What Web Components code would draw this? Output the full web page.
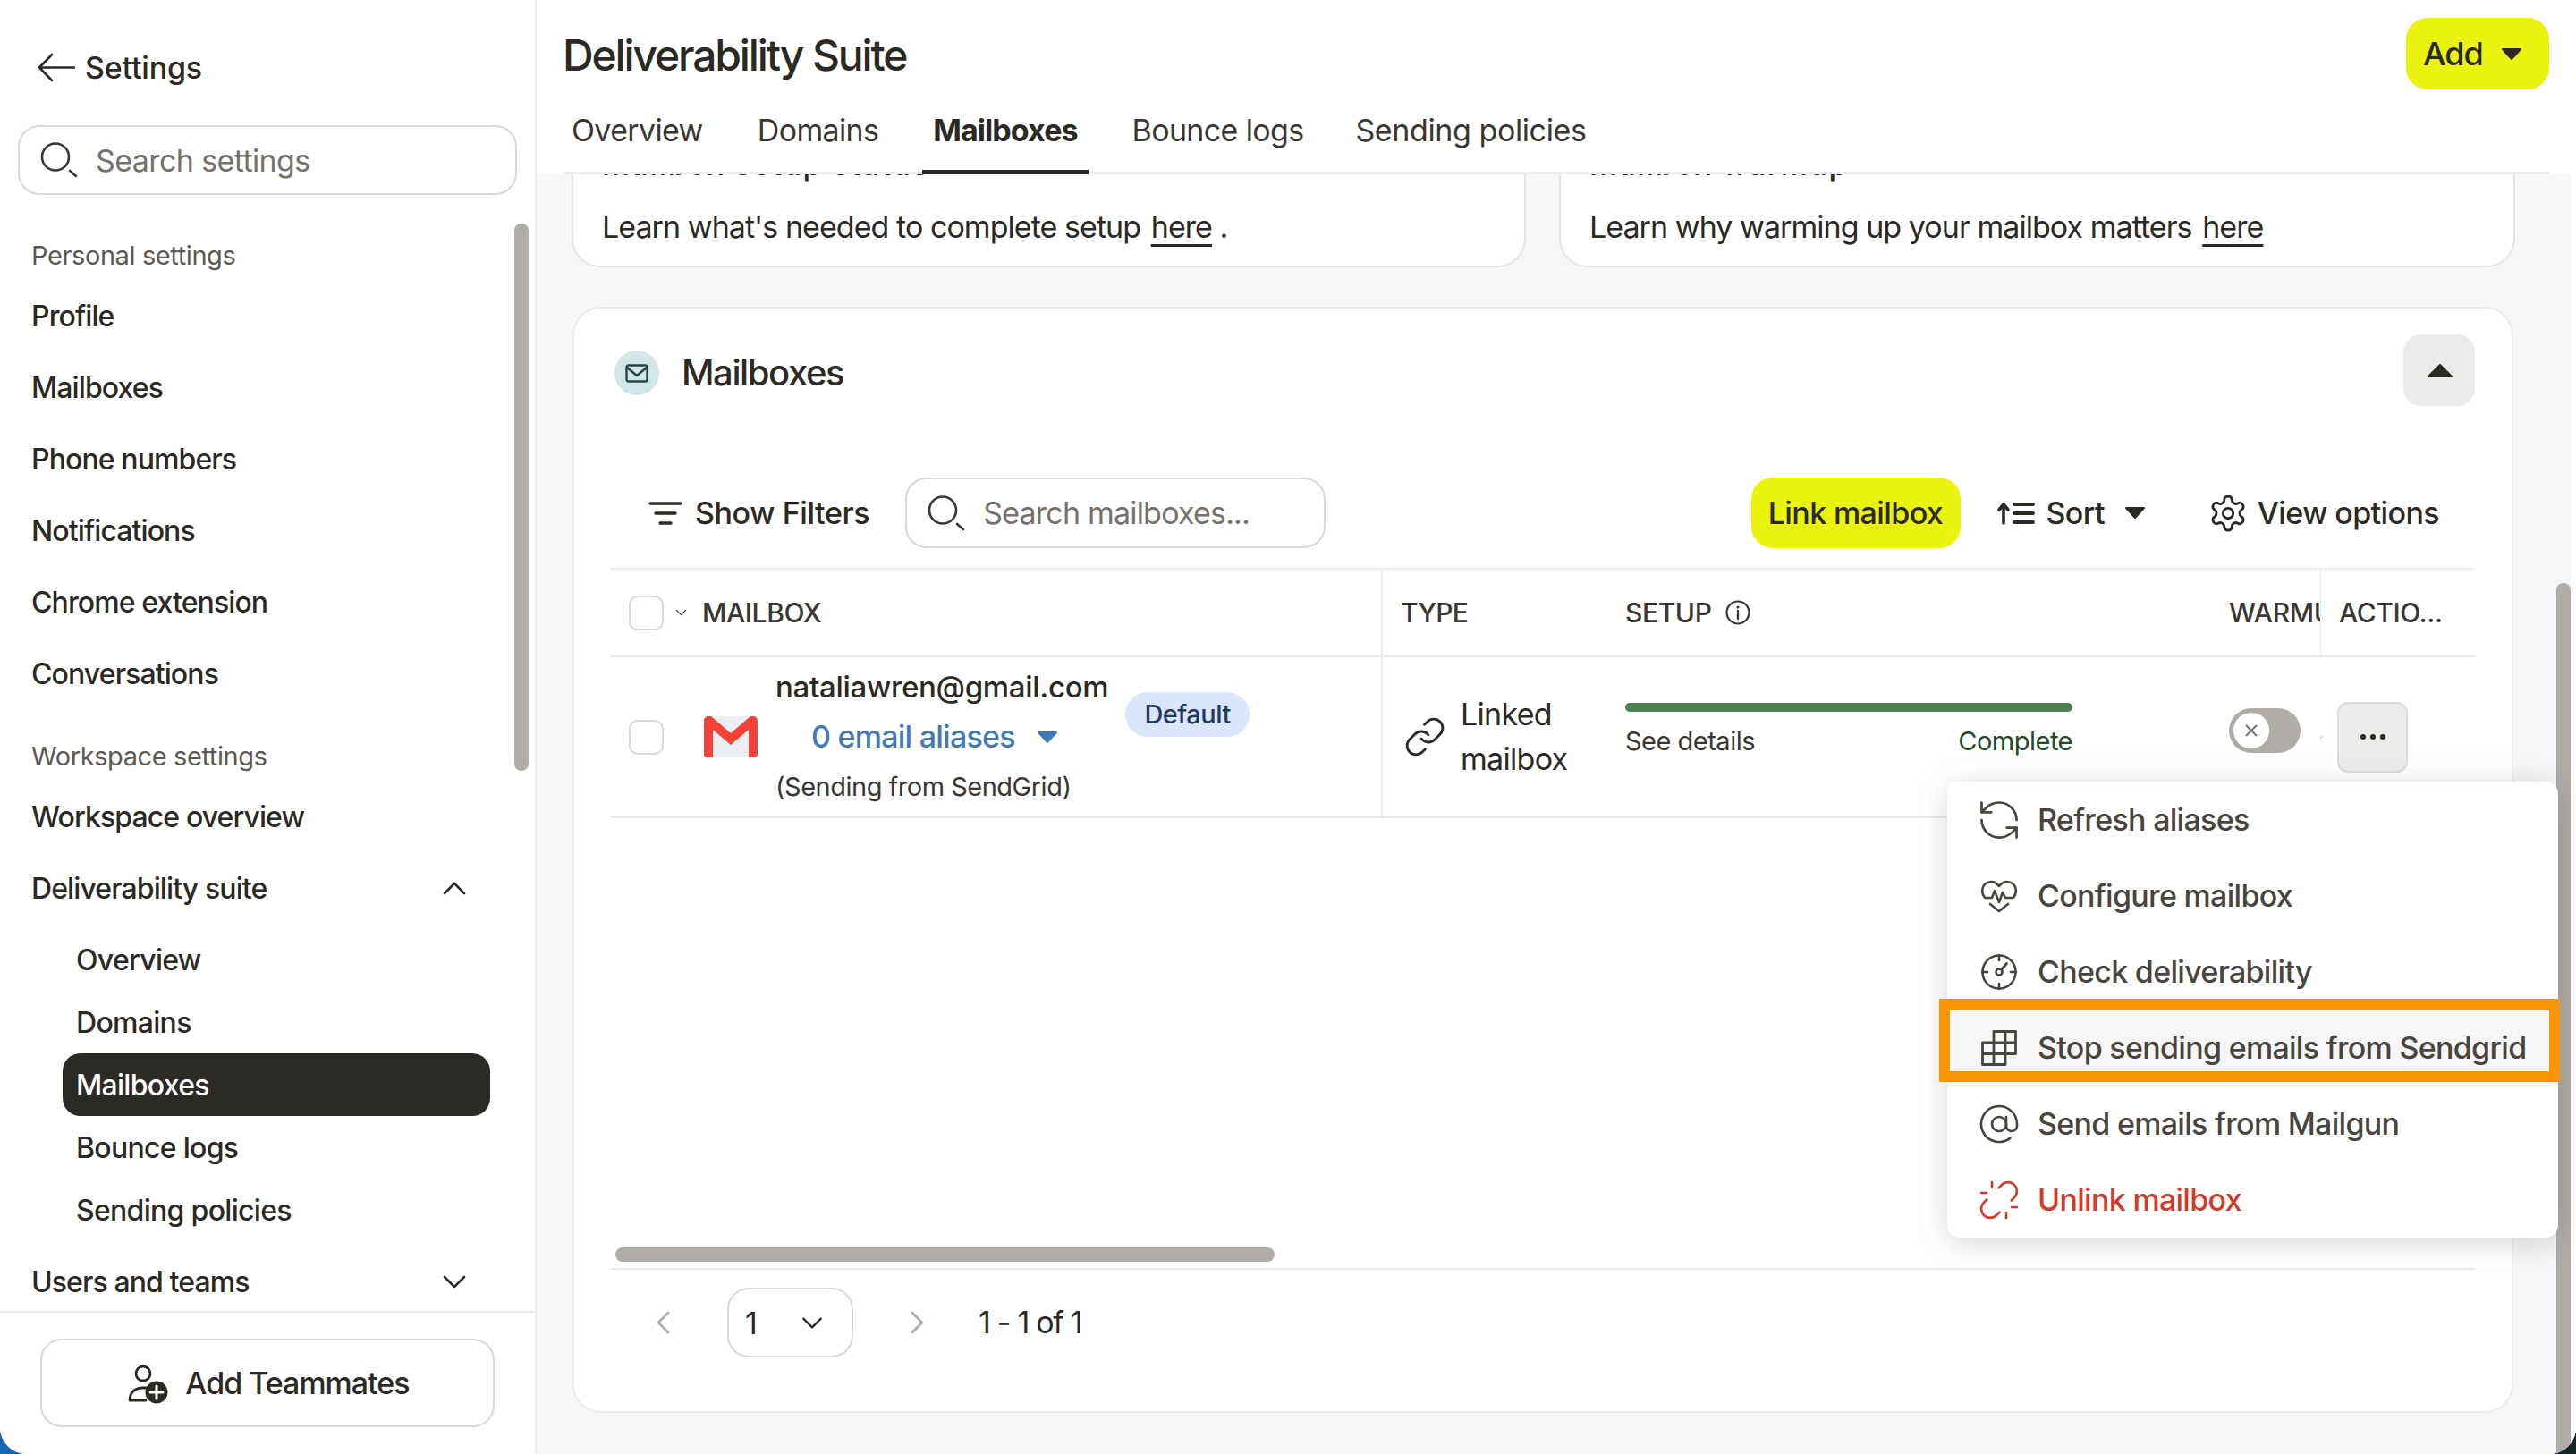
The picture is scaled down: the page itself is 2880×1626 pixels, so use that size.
<!DOCTYPE html>
<html lang="en">
<head>
<meta charset="utf-8">
<title>Deliverability Suite</title>
<style>
html, body { margin: 0; width: 2880px; height: 1626px; overflow: hidden; }
body { background: linear-gradient(90deg, #1566b8 0, #1566b8 60px, #14262a 2800px); }
</style>
</head>
<body>
<app-window>
  <settings-sidebar slot="side">
    <nav-label>Personal settings</nav-label>
    <nav-item>Profile</nav-item>
    <nav-item>Mailboxes</nav-item>
    <nav-item>Phone numbers</nav-item>
    <nav-item>Notifications</nav-item>
    <nav-item>Chrome extension</nav-item>
    <nav-item>Conversations</nav-item>
    <nav-label gap>Workspace settings</nav-label>
    <nav-item>Workspace overview</nav-item>
    <nav-item chevron="up">Deliverability suite</nav-item>
    <nav-item sub first>Overview</nav-item>
    <nav-item sub>Domains</nav-item>
    <nav-item sub active>Mailboxes</nav-item>
    <nav-item sub>Bounce logs</nav-item>
    <nav-item sub last>Sending policies</nav-item>
    <nav-item chevron="down">Users and teams</nav-item>
  </settings-sidebar>
  <page-header slot="head"></page-header>
  <info-cards slot="main">
    <info-card heading="Mailbox setup status" suffix=" .">Learn what's needed to complete setup</info-card>
    <info-card heading="Mailbox warmup">Learn why warming up your mailbox matters</info-card>
  </info-cards>
  <mailbox-panel slot="main"></mailbox-panel>
  <action-menu slot="overlay"></action-menu>
</app-window>

<script>
const ICONS = {
  back: '<path d="M40 15.500H1M15 1 1 15.500 15 30" stroke-width="2.600"/>',
  search: '<circle cx="16" cy="15.500" r="15" stroke-width="2.600"/><path d="m32 31 7 6" stroke-width="2.600"/>',
  envelope: '<rect x="1.500" y="1.500" width="23" height="18" rx="2" stroke-width="2.400"/><path d="m2 4 11 9 11-9" stroke-width="2.400"/>',
  filter: '<path d="M0 2h34M6 13h22M11 24h12" stroke-width="3.400"/>',
  sort: '<path d="M6 24V3M1 9l5-6 5 6" stroke-width="3.600"/><path d="M18 3h21M18 13h21M18 23h21" stroke-width="3.800" stroke-linecap="round"/>',
  gear: '<g transform="translate(-2.800 -2.800) scale(1.900)"><path stroke-width="1.500" d="M12.220 2h-.44a2 2 0 0 0-2 2v.18a2 2 0 0 1-1 1.730l-.43.25a2 2 0 0 1-2 0l-.15-.08a2 2 0 0 0-2.730.73l-.22.38a2 2 0 0 0 .73 2.730l.15.1a2 2 0 0 1 1 1.720v.51a2 2 0 0 1-1 1.740l-.15.09a2 2 0 0 0-.73 2.730l.22.38a2 2 0 0 0 2.730.73l.15-.08a2 2 0 0 1 2 0l.43.25a2 2 0 0 1 1 1.730V20a2 2 0 0 0 2 2h.44a2 2 0 0 0 2-2v-.18a2 2 0 0 1 1-1.730l.43-.25a2 2 0 0 1 2 0l.15.08a2 2 0 0 0 2.730-.73l.22-.39a2 2 0 0 0-.73-2.730l-.15-.08a2 2 0 0 1-1-1.740v-.5a2 2 0 0 1 1-1.740l.15-.09a2 2 0 0 0 .73-2.730l-.22-.38a2 2 0 0 0-2.730-.73l-.15.08a2 2 0 0 1-2 0l-.43-.25a2 2 0 0 1-1-1.730V4a2 2 0 0 0-2-2z"/><circle cx="12" cy="12" r="3" stroke-width="1.500"/></g>',
  link: '<g transform="translate(-3 -3) scale(2)"><path stroke-width="1.400" d="M10 13a5 5 0 0 0 7.540.54l3-3a5 5 0 0 0-7.070-7.070l-1.720 1.710"/><path stroke-width="1.400" d="M14 11a5 5 0 0 0-7.540-.54l-3 3a5 5 0 0 0 7.070 7.070l1.710-1.710"/></g>',
  info: '<circle cx="14" cy="14" r="12.500" stroke-width="2.200"/><path d="M14 12v9" stroke-width="2.400"/><circle cx="14" cy="8" r="1.500" fill="currentColor" stroke="none"/>',
  refresh: '<g transform="translate(-6 -6) scale(2.170)"><path stroke-width="1.250" d="M21 12a9 9 0 0 0-9-9 9.750 9.750 0 0 0-6.740 2.740L3 8"/><path stroke-width="1.250" d="M3 3v5h5"/><path stroke-width="1.250" d="M3 12a9 9 0 0 0 9 9 9.750 9.750 0 0 0 6.740-2.740L21 16"/><path stroke-width="1.250" d="M16 16h5v5"/></g>',
  heart: '<path stroke-width="2.600" d="M4 22C0 17 0 9 6 5.500 12 2.500 17 5 20 9c3-4 8-6.500 14-3.500 6 3.500 6 11.500 2 16.500h-9l-3-6-4 11-5-13-3 8z"/><path stroke-width="2.600" d="m10 29 10 8 10-8"/>',
  gauge: '<circle cx="20" cy="20" r="18.500" stroke-width="2.600"/><path stroke-width="2.600" d="M20 1v6M20 33v6M1 20h6M33 20h6"/><circle cx="20" cy="20" r="3.500" stroke-width="2.600"/><path stroke-width="2.800" d="m22.500 17.500 6-7"/>',
  grid: '<path stroke-width="2.800" d="M14 1.500h24.500v25H27M14 14V1.500M27 1.500v25M1.500 14h37M1.500 14v24.500H27V14M14 14v24.500M1.500 26.500H27"/>',
  at: '<g transform="translate(-4 -4) scale(2)"><circle cx="12" cy="12" r="4" stroke-width="1.300"/><path stroke-width="1.300" d="M16 8v5a3 3 0 0 0 6 0v-1a10 10 0 1 0-3.920 7.940"/></g>',
  unlink: '<g transform="translate(-4 -4) scale(2)"><path stroke-width="1.300" d="m18.840 12.250 1.720-1.710h-.02a5.004 5.004 0 0 0-.12-7.070 5.006 5.006 0 0 0-6.950 0l-1.720 1.710"/><path stroke-width="1.300" d="m5.170 11.750-1.710 1.710a5.004 5.004 0 0 0 .12 7.070 5.006 5.006 0 0 0 6.950 0l1.710-1.710"/><path stroke-width="1.300" d="M8 2v3M2 8h3M16 19v3M19 16h3"/></g>',
  gmail: '<path fill="#eceff1" stroke="none" d="M4 0h52a4 4 0 0 1 4 4v38a4 4 0 0 1-4 4H4a4 4 0 0 1-4-4V4a4 4 0 0 1 4-4z"/><path fill="#f44336" stroke="none" d="M0 5a5 5 0 0 1 5-5h3l22 19L52 0h3a5 5 0 0 1 5 5v37a4 4 0 0 1-4 4h-6V15L30 32 10 15v31H4a4 4 0 0 1-4-4z"/>',
  addUser: '<circle cx="17" cy="11" r="8" stroke-width="2.800"/><path stroke-width="2.800" d="M2 41c0-9 6-14 15-14h5M2 41h18"/><circle cx="32" cy="32" r="12.500" fill="currentColor" stroke="none"/><path stroke="#fff" stroke-width="3" d="M32 25v14M25 32h14"/>',
  chevUp: '<path d="M2 14 13 3l11 11" stroke-width="2.600"/>',
  chevDown: '<path d="m2 3 11 11L24 3" stroke-width="2.600"/>',
  pageLeft: '<path d="M13 1 2 12l11 11" stroke-width="2.600"/>',
  pageRight: '<path d="m2 1 11 11L2 23" stroke-width="2.600"/>',
  triDown: '<path fill="currentColor" stroke="currentColor" stroke-width="2" stroke-linejoin="round" d="M2 2h20L12 13z"/>',
  triUp: '<path fill="currentColor" stroke="currentColor" stroke-width="2" stroke-linejoin="round" d="M12 2 25 15H-1z" transform="translate(1 0)"/>'
};

class UiIcon extends HTMLElement {
  constructor() {
    super();
    this.sr = this.attachShadow({ mode: "open" });
  }

  connectedCallback() {
    const w = this.getAttribute("w");
    const h = this.getAttribute("h") || w;
    const box = this.getAttribute("box") || `0 0 ${w} ${h}`;
    this.sr.innerHTML = `<style>
:host { display: inline-flex; flex: none; width: ${w}px; height: ${h}px; }
svg { width: 100%; height: 100%; overflow: visible; fill: none; stroke: currentColor; stroke-linecap: round; stroke-linejoin: round; }
</style><svg viewBox="${box}">${ICONS[this.getAttribute("name")]}</svg>`;
  }
}
customElements.define("ui-icon", UiIcon);

class AppWindow extends HTMLElement {
  constructor() {
    super();
    this.sr = this.attachShadow({ mode: "open" });
    this.sr.innerHTML = `<style>
:host { display: grid; grid-template-columns: 600px 1fr; position: relative; width: 2880px; height: 1626px; overflow: hidden; background: #fff; border-radius: 0 0 30px 30px; font-family: Inter, "Liberation Sans", sans-serif; color: #2b2924; }
.main { display: flex; flex-direction: column; min-width: 0; height: 1626px; background: #fff; }
.scroll { position: relative; flex: 1; overflow: hidden; background: #f6f6f6; border-right: 6px solid #fff; }
.bar { position: absolute; right: 0; top: 457px; bottom: 0; width: 16px; background: #b0aca8; border-radius: 8px 8px 0 0; }
</style>
<slot name="side"></slot>
<div class="main">
  <slot name="head"></slot>
  <div class="scroll"><slot name="main"></slot><div class="bar"></div></div>
</div>
<slot name="overlay"></slot>`;
  }
}
customElements.define("app-window", AppWindow);

class SearchBox extends HTMLElement {
  constructor() {
    super();
    this.sr = this.attachShadow({ mode: "open" });
    this.sr.innerHTML = `<style>
:host { display: flex; align-items: center; box-sizing: border-box; border: 2px solid #d9d9d7; border-radius: 24px; background: #fff; color: #75716b; font-size: 34px; letter-spacing: -0.8px; }
ui-icon { color: #3a3733; }
</style><ui-icon name="search" w="40" h="38"></ui-icon><slot></slot>`;
  }
}
customElements.define("search-box", SearchBox);

class SettingsSidebar extends HTMLElement {
  constructor() {
    super();
    this.sr = this.attachShadow({ mode: "open" });
    this.sr.innerHTML = `<style>
:host { display: flex; flex-direction: column; position: relative; box-sizing: border-box; width: 600px; height: 1626px; border-right: 2px solid #ececec; background: #fff; }
.top { display: flex; align-items: center; gap: 12px; height: 80px; margin: 35px 0 25px 43px; font-size: 34px; font-weight: 500; letter-spacing: -0.2px; }
search-box { width: 558px; height: 78px; margin-left: 20px; padding-left: 24px; font-size: 34px; gap: 21px; letter-spacing: -0.6px; }
nav { flex: 1; overflow: hidden; padding-top: 39px; min-height: 0; }
.bar { position: absolute; left: 575px; top: 250px; width: 16px; height: 612px; border-radius: 8px; background: #b0aca8; }
.foot { flex: none; box-sizing: border-box; height: 160px; border-top: 2px solid #ececec; padding: 29px 0 0 45px; }
.add { display: flex; align-items: center; justify-content: center; gap: 20px; box-sizing: border-box; width: 508px; height: 99px; padding-left: 3px; border: 2px solid #d9d9d7; border-radius: 24px; font-size: 34px; font-weight: 500; letter-spacing: -1px; }
</style>
<div class="top"><ui-icon name="back" w="40" h="31"></ui-icon><span>Settings</span></div>
<search-box>Search settings</search-box>
<nav><slot></slot></nav>
<div class="bar"></div>
<div class="foot"><div class="add"><ui-icon name="addUser" w="44"></ui-icon><span>Add Teammates</span></div></div>`;
  }
}
customElements.define("settings-sidebar", SettingsSidebar);

class NavLabel extends HTMLElement {
  constructor() {
    super();
    this.sr = this.attachShadow({ mode: "open" });
    this.sr.innerHTML = `<style>
:host { display: flex; align-items: center; height: 56px; padding-left: 35px; font-size: 29px; color: #5c5954; letter-spacing: -0.4px; }
:host([gap]) { margin-top: 24px; }
</style><slot></slot>`;
  }
}
customElements.define("nav-label", NavLabel);

class NavItem extends HTMLElement {
  constructor() {
    super();
    this.sr = this.attachShadow({ mode: "open" });
  }

  connectedCallback() {
    const chevron = this.getAttribute("chevron");
    let arrow = "";
    if (chevron === "up") arrow = '<ui-icon name="chevUp" w="26" h="17"></ui-icon>';
    if (chevron === "down") arrow = '<ui-icon name="chevDown" w="26" h="17"></ui-icon>';
    this.sr.innerHTML = `<style>
:host { display: flex; align-items: center; justify-content: space-between; box-sizing: border-box; width: 521px; height: 80px; padding-left: 35px; font-size: 32px; font-weight: 500; letter-spacing: -0.9px; }
:host([sub]) { width: 478px; height: 70px; margin-left: 70px; padding-left: 15px; letter-spacing: -0.7px; }
:host([first]) { margin-top: 5px; }
:host([last]) { margin-bottom: 5px; }
:host([active]) { background: #2c2a26; color: #fff; border-radius: 20px; }
</style><slot></slot>${arrow}`;
  }
}
customElements.define("nav-item", NavItem);

class PageHeader extends HTMLElement {
  constructor() {
    super();
    this.sr = this.attachShadow({ mode: "open" });
    this.sr.innerHTML = `<style>
:host { display: block; flex: none; box-sizing: border-box; height: 195px; padding: 0 30px; background: #fff; }
.in { box-sizing: border-box; height: 195px; border-bottom: 3px solid #ececec; }
.row { display: flex; justify-content: space-between; height: 100px; padding-top: 20px; box-sizing: border-box; }
h1 { margin: 14px 0 0 -1px; font-size: 48px; line-height: 56px; font-weight: 500; letter-spacing: -2.15px; }
.add { display: flex; align-items: center; gap: 20px; box-sizing: border-box; width: 160px; height: 80px; padding-left: 19px; border-radius: 24px; background: #eaf30f; font-size: 36px; font-weight: 500; letter-spacing: -1px; }
.tabs { display: flex; gap: 37px; margin-left: -3px; height: 95px; }
.tab { display: flex; align-items: center; box-sizing: border-box; height: 95px; padding: 0 12px 5px; font-size: 34px; letter-spacing: -0.65px; color: #3a3733; }
.tab.on { font-weight: 700; color: #2b2924; border-bottom: 5px solid #2b2924; padding-bottom: 0; letter-spacing: -0.95px; }
.tab.last { margin-left: -3px; letter-spacing: -0.4px; }
</style>
<div class="in">
  <div class="row"><h1>Deliverability Suite</h1><div class="add"><span>Add</span><ui-icon name="triDown" w="24" h="15" box="0 0 24 15"></ui-icon></div></div>
  <div class="tabs"><div class="tab">Overview</div><div class="tab">Domains</div><div class="tab on">Mailboxes</div><div class="tab">Bounce logs</div><div class="tab last">Sending policies</div></div>
</div>`;
  }
}
customElements.define("page-header", PageHeader);

class InfoCards extends HTMLElement {
  constructor() {
    super();
    this.sr = this.attachShadow({ mode: "open" });
    this.sr.innerHTML = `<style>
:host { display: grid; grid-template-columns: 1067px 1069px; gap: 37px; margin: -47px 0 44px 39px; }
</style><slot></slot>`;
  }
}
customElements.define("info-cards", InfoCards);

class InfoCard extends HTMLElement {
  constructor() {
    super();
    this.sr = this.attachShadow({ mode: "open" });
  }

  connectedCallback() {
    this.sr.innerHTML = `<style>
:host { display: block; box-sizing: border-box; height: 151px; padding: 15px 0 0 32px; background: #fff; border: 2px solid #e4e4e4; border-top: 0; border-radius: 0 0 32px 32px; }
h2 { margin: 0 0 25px; font-size: 34px; line-height: 41px; font-weight: 500; letter-spacing: 1.5px; white-space: nowrap; }
p { margin: 0; font-size: 34px; line-height: 50px; letter-spacing: -0.95px; color: #2b2924; }
a { color: inherit; text-decoration: underline; text-decoration-thickness: 3px; text-underline-offset: 7px; margin-left: 3px; }
</style><h2>${this.getAttribute("heading")}</h2><p><slot></slot> <a>here</a>${this.getAttribute("suffix") || ""}</p>`;
  }
}
customElements.define("info-card", InfoCard);

class CheckBox extends HTMLElement {
  constructor() {
    super();
    this.sr = this.attachShadow({ mode: "open" });
    this.sr.innerHTML = `<style>
:host { display: block; flex: none; box-sizing: border-box; width: 39px; height: 39px; border: 2px solid #d9d9d7; border-radius: 10px; background: #fff; }
</style>`;
  }
}
customElements.define("check-box", CheckBox);

class MailboxPanel extends HTMLElement {
  constructor() {
    super();
    this.sr = this.attachShadow({ mode: "open" });
    this.sr.innerHTML = `<style>
:host { display: flex; flex-direction: column; box-sizing: border-box; width: 2170px; height: 1237px; margin-left: 40px; padding: 29px 41px 0 40px; background: #fff; border: 2px solid #ececec; border-radius: 32px; }
.head { display: flex; align-items: center; height: 80px; padding-left: 5px; }
.dot { display: flex; align-items: center; justify-content: center; width: 50px; height: 50px; margin: 6px 25px 0 0; border-radius: 50%; background: #d2e6e8; color: #24454b; }
h2 { flex: 1; margin: 4px 0 0; font-size: 40px; font-weight: 500; letter-spacing: -1.4px; }
.toggle { display: flex; align-items: center; justify-content: center; width: 80px; height: 80px; padding-left: 2px; box-sizing: border-box; border-radius: 20px; background: #ebebea; }
.scroll { margin: auto 0 7px 6px; width: 737px; height: 16px; flex: none; border-radius: 8px; background: #b0aca8; }
</style>
<div class="head"><div class="dot"><ui-icon name="envelope" w="26" h="21"></ui-icon></div><h2>Mailboxes</h2><div class="toggle"><ui-icon name="triUp" w="26" h="16" box="0 0 26 16"></ui-icon></div></div>
<mailbox-toolbar></mailbox-toolbar>
<mailbox-table></mailbox-table>
<div class="scroll"></div>
<table-pager></table-pager>`;
  }
}
customElements.define("mailbox-panel", MailboxPanel);

class MailboxToolbar extends HTMLElement {
  constructor() {
    super();
    this.sr = this.attachShadow({ mode: "open" });
    this.sr.innerHTML = `<style>
:host { display: flex; align-items: center; flex: none; height: 79px; margin: 80px 0 22px; padding: 0 40px 0 45px; font-size: 34px; font-weight: 500; letter-spacing: -0.6px; }
search-box { width: 470px; height: 79px; margin-left: 40px; padding-left: 24px; gap: 21px; font-weight: 400; }
.link { display: flex; align-items: center; justify-content: center; box-sizing: border-box; width: 234px; height: 79px; margin-left: auto; padding-right: 2px; border-radius: 24px; background: #eaf30f; }
.sort { display: flex; align-items: center; margin-left: 42px; }
.sort span { margin: 0 22px 0 13px; }
.view { display: flex; align-items: center; gap: 13px; margin-left: 72px; }
.filters { display: flex; align-items: center; gap: 16px; letter-spacing: -0.4px; }
</style>
<div class="filters"><ui-icon name="filter" w="34" h="26"></ui-icon><span>Show Filters</span></div>
<search-box>Search mailboxes...</search-box>
<div class="link">Link mailbox</div>
<div class="sort"><ui-icon name="sort" w="40" h="26"></ui-icon><span>Sort</span><ui-icon name="triDown" w="24" h="15" box="0 0 24 15"></ui-icon></div>
<div class="view"><ui-icon name="gear" w="40"></ui-icon><span>View options</span></div>`;
  }
}
customElements.define("mailbox-toolbar", MailboxToolbar);

class MailboxTable extends HTMLElement {
  constructor() {
    super();
    this.sr = this.attachShadow({ mode: "open" });
    this.sr.innerHTML = `<style>
:host { display: grid; flex: none; grid-template-columns: 864px 251px 675px 122px 173px; grid-template-rows: 98px 178px; box-sizing: border-box; width: 2085px; border-top: 2px solid #ececec; border-bottom: 2px solid #ececec; font-size: 32px; letter-spacing: -0.6px; }
.th { display: flex; align-items: center; gap: 15px; box-sizing: border-box; padding-left: 21px; border-bottom: 2px solid #ececec; overflow: hidden; white-space: nowrap; font-size: 30px; font-weight: 500; color: #3a3733; letter-spacing: -0.4px; }
.first { border-right: 2px solid #ececec; }
.act { border-left: 1px solid #ececec; padding-left: 20px; }
.td { display: flex; box-sizing: border-box; padding-left: 21px; align-items: center; min-width: 0; }
.tiny { margin-left: -2px; margin-right: 2px; color: #3a3733; }
.logo { margin: 0 20px 0 45px; }
.who { display: flex; flex-direction: column; white-space: nowrap; }
.who div { height: 56px; line-height: 56px; }
.email { font-weight: 500; font-size: 33px; letter-spacing: -0.3px; }
.aliases { display: flex; align-items: center; gap: 24px; padding-left: 40px; color: #4279b5; font-weight: 500; font-size: 34px; letter-spacing: -0.75px; }
.sending { font-size: 29px; color: #3a3733; letter-spacing: -0.5px; }
.pill { align-self: flex-start; margin: 39px 0 0 19px; padding: 0 21px; height: 50px; line-height: 50px; border-radius: 25px; background: #dbe5fb; color: #1e3a5f; font-size: 29px; font-weight: 500; letter-spacing: -0.5px; }
.type { padding-left: 26px; gap: 19px; line-height: 50px; font-size: 34px; letter-spacing: -0.7px; color: #2b2924; }
.setup { display: block; padding: 51px 0 0 20px; }
.track { width: 500px; height: 10px; border-radius: 5px; background: #4c8050; }
.under { display: flex; justify-content: space-between; width: 500px; margin-top: 15px; line-height: 36px; font-size: 29px; color: #3a3733; letter-spacing: -0.5px; }
.done { color: #1f4a26; }
.warm { padding: 0 0 14px 20px; }
.sw { display: flex; align-items: center; width: 80px; height: 50px; box-sizing: border-box; padding-left: 5px; border-radius: 25px; background: #b0aca8; }
.knob { display: flex; align-items: center; justify-content: center; width: 40px; height: 40px; border-radius: 50%; background: #fff; color: #77736d; }
.knob svg { width: 16px; height: 16px; stroke: currentColor; stroke-width: 2; fill: none; }
.tick { flex: none; width: 3px; height: 3px; margin: 0 16px 0 -19px; border-radius: 50%; background: #d9d9d7; }
.more { display: flex; align-items: center; justify-content: center; gap: 5px; box-sizing: border-box; width: 79px; height: 79px; border: 2px solid #dcdcda; border-radius: 12px; background: #ebebea; }
.more i { display: block; width: 6px; height: 6px; border-radius: 50%; background: #2b2924; }
</style>
<div class="th first"><check-box></check-box><ui-icon class="tiny" name="chevDown" w="13" h="8" box="0 0 26 17"></ui-icon><span>MAILBOX</span></div>
<div class="th" style="padding-left:20px;letter-spacing:-0.8px">TYPE</div>
<div class="th" style="padding-left:20px"><span>SETUP</span><ui-icon name="info" w="28"></ui-icon></div>
<div class="th" style="padding-left:20px">WARMUP</div>
<div class="th act">ACTIO...</div>
<div class="td first"><check-box></check-box><ui-icon class="logo" name="gmail" w="60" h="46"></ui-icon>
  <div class="who"><div class="email">nataliawren@gmail.com</div><div class="aliases"><span>0 email aliases</span><ui-icon name="triDown" w="24" h="15" box="0 0 24 15"></ui-icon></div><div class="sending">(Sending from SendGrid)</div></div>
  <div class="pill">Default</div></div>
<div class="td type"><ui-icon name="link" w="42"></ui-icon><div>Linked<br>mailbox</div></div>
<div class="td setup"><div class="track"></div><div class="under"><span>See details</span><span class="done">Complete</span></div></div>
<div class="td warm"><div class="sw"><div class="knob"><svg viewBox="0 0 16 16"><path d="m2 2 12 12M14 2 2 14"/></svg></div></div></div>
<div class="td" style="padding-left:19px"><span class="tick"></span><div class="more"><i></i><i></i><i></i></div></div>`;
  }
}
customElements.define("mailbox-table", MailboxTable);

class TablePager extends HTMLElement {
  constructor() {
    super();
    this.sr = this.attachShadow({ mode: "open" });
    this.sr.innerHTML = `<style>
:host { display: flex; align-items: flex-start; flex: none; box-sizing: border-box; width: 2085px; height: 160px; border-top: 2px solid #ececec; padding: 20px 0 0 52px; font-size: 34px; letter-spacing: -1.3px; }
.left, .right { color: #aeaaa5; margin-top: 27px; }
.select { display: flex; align-items: center; justify-content: space-between; box-sizing: border-box; width: 141px; height: 78px; margin: 0 64px 0 64px; padding: 0 32px 0 18px; border: 2px solid #d9d9d7; border-radius: 24px; }
.count { margin-left: 61px; line-height: 78px; }
</style>
<ui-icon class="left" name="pageLeft" w="15" h="24"></ui-icon>
<div class="select"><span>1</span><ui-icon name="chevDown" w="24" h="15" box="0 0 26 17"></ui-icon></div>
<ui-icon class="right" name="pageRight" w="15" h="24"></ui-icon>
<div class="count">1 - 1 of 1</div>`;
  }
}
customElements.define("table-pager", TablePager);

class MenuItem extends HTMLElement {
  constructor() {
    super();
    this.sr = this.attachShadow({ mode: "open" });
  }

  connectedCallback() {
    this.sr.innerHTML = `<style>
:host { display: flex; align-items: center; gap: 23px; box-sizing: border-box; height: 85px; padding-left: 38px; font-size: 34px; font-weight: 500; letter-spacing: -0.7px; color: #48453f; }
:host([danger]) { color: #d13a2b; }
:host([hot]) { background: #f6f6f6; }
</style><ui-icon name="${this.getAttribute("icon")}" w="40"></ui-icon><slot></slot>`;
  }
}
customElements.define("menu-item", MenuItem);

class ActionMenu extends HTMLElement {
  constructor() {
    super();
    this.sr = this.attachShadow({ mode: "open" });
    this.sr.innerHTML = `<style>
:host { position: absolute; left: 2177px; top: 874px; width: 683px; height: 510px; background: #fff; border-radius: 14px; box-shadow: 0 6px 36px rgba(0,0,0,.16); }
.mark { position: absolute; left: -9px; top: 243px; box-sizing: border-box; width: 694px; height: 93px; border: 12px solid #f79503; border-top-width: 13px; pointer-events: none; }
</style>
<menu-item icon="refresh">Refresh aliases</menu-item>
<menu-item icon="heart">Configure mailbox</menu-item>
<menu-item icon="gauge">Check deliverability</menu-item>
<menu-item icon="grid" hot>Stop sending emails from Sendgrid</menu-item>
<menu-item icon="at">Send emails from Mailgun</menu-item>
<menu-item icon="unlink" danger>Unlink mailbox</menu-item>
<div class="mark"></div>`;
  }
}
customElements.define("action-menu", ActionMenu);
</script>
</body>
</html>
